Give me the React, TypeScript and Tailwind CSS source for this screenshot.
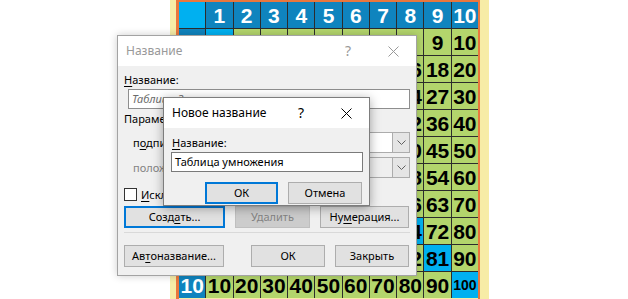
import React from 'react';

const HEADER = 'bg-[#0f84be] text-white';
const DIAG = 'bg-[#00b0f0] text-black';
const BODY = 'bg-[#b3d56c] text-black';

function Cell({ r, c }: { r: number; c: number }) {
  let cls = BODY;
  let value = '';
  if (r === 0 && c === 0) cls = DIAG;
  else if (r === 0 || c === 0) {
    cls = HEADER;
    value = String(r === 0 ? c : r);
  } else {
    cls = r === c ? DIAG : BODY;
    value = String(r * c);
  }
  const small = value.length > 2;
  return (
    <div
      className={`${cls} flex items-center justify-center font-bold leading-none ${
        small ? 'text-[14px]' : 'text-[21px]'
      }`}
    >
      {value}
    </div>
  );
}

function TimesTable() {
  const cells = [];
  for (let r = 0; r < 11; r++) {
    for (let c = 0; c < 11; c++) {
      cells.push(<Cell key={`${r}-${c}`} r={r} c={c} />);
    }
  }
  return (
    <div className="ml-[170px] w-[319px] h-[299px] bg-[#f7eca6] pl-[6px]">
      <div className="w-[304px] h-[299px] border-l-[3px] border-r-[2px] border-t-[2px] border-[#e9773d] overflow-hidden">
        <div className="grid grid-cols-11 auto-rows-[26px] gap-px bg-[#2c2c2c] w-[299px] font-['Liberation_Sans',Arial,sans-serif]">
          {cells}
        </div>
      </div>
    </div>
  );
}

function CloseIcon({ color }: { color: string }) {
  return (
    <svg width="11" height="11" viewBox="0 0 11 11">
      <path d="M0.5 0.5 L10.5 10.5 M10.5 0.5 L0.5 10.5" stroke={color} strokeWidth="1" fill="none" />
    </svg>
  );
}

function TitleBar({ title, active }: { title: string; active: boolean }) {
  const color = active ? '#000000' : '#999999';
  return (
    <div className="h-[30px] bg-white flex items-center text-[12px]">
      <div className={`flex-1 pl-[8px] ${active ? 'text-black' : 'text-[#999999]'}`}>{title}</div>
      <div className={`w-[46px] flex justify-center text-[14px] ${active ? 'text-black' : 'text-[#999999]'}`}>?</div>
      <div className="w-[45px] flex justify-center">
        <CloseIcon color={color} />
      </div>
    </div>
  );
}

function Button({
  children,
  width,
  focused,
  disabled,
}: {
  children: React.ReactNode;
  width: string;
  focused?: boolean;
  disabled?: boolean;
}) {
  return (
    <div
      className={`${width} h-[22px] flex items-center justify-center ${
        focused
          ? 'border-2 border-[#0078d7] bg-[#e1e1e1]'
          : disabled
          ? 'border border-[#bfbfbf] bg-[#cccccc] text-[#838383]'
          : 'border border-[#adadad] bg-[#e1e1e1]'
      }`}
    >
      {children}
    </div>
  );
}

function Select({ disabled }: { disabled?: boolean }) {
  return (
    <div
      className={`ml-auto w-[210px] h-[21px] flex border border-[#acacac] ${
        disabled ? 'bg-[#efefef]' : 'bg-white'
      }`}
    >
      <div className="flex-1" />
      <div className="w-[17px] bg-[#e5e5e5] border-l border-[#acacac] flex items-center justify-center">
        <svg width="9" height="5" viewBox="0 0 9 5">
          <path d="M0.5 0.5 L4.5 4.5 L8.5 0.5" stroke="#606060" strokeWidth="1" fill="none" />
        </svg>
      </div>
    </div>
  );
}

const U = ({ children }: { children: React.ReactNode }) => (
  <span className="underline underline-offset-2">{children}</span>
);

function CaptionDialog() {
  return (
    <div className="absolute left-[117px] top-[35px] w-[300px] h-[241px] border border-[#a3a3a3] bg-[#f0f0f0] shadow-[0_0_8px_rgba(0,0,0,0.2)]">
      <TitleBar title="Название" active={false} />
      <div className="px-[6px] pt-[6px] text-black">
        <div className="h-[16px] leading-[16px]">
          <U>Н</U>азвание:
        </div>
        <div className="mt-[1px] ml-[4px] w-[282px] h-[20px] border border-[#8e8e8e] bg-white flex items-center pl-[3px] italic text-[#6b6b6b]">
          Таблица 3
        </div>
        <div className="mt-[2px] h-[16px] leading-[16px]">Параметры</div>
        <div className="mt-[5px] flex items-center">
          <div className="pl-[9px]">
            п<U>о</U>дпись:
          </div>
          <Select />
        </div>
        <div className="mt-[4px] flex items-center">
          <div className="pl-[9px] text-[#838383]">положение:</div>
          <Select disabled />
        </div>
        <div className="mt-[10px] flex items-center h-[13px]">
          <div className="w-[13px] h-[13px] border border-[#333333] bg-white" />
          <div className="ml-[4px]">
            <U>И</U>сключить подпись из названия
          </div>
        </div>
        <div className="mt-[5px] flex gap-[10px]">
          <Button width="w-[101px]" focused>
            Созд<U>а</U>ть...
          </Button>
          <Button width="w-[75px]" disabled>
            Удалить
          </Button>
          <Button width="w-[89px]">
            Ну<U>м</U>ерация...
          </Button>
        </div>
        <div className="mt-[4px] h-px bg-[#d9d9d9]" />
        <div className="mt-[12px] flex">
          <Button width="w-[100px]">
            Ав<U>т</U>оназвание...
          </Button>
          <div className="ml-[27px]">
            <Button width="w-[74px]">ОК</Button>
          </div>
          <div className="ml-[10px]">
            <Button width="w-[74px]">Закрыть</Button>
          </div>
        </div>
      </div>
    </div>
  );
}

function NewLabelDialog() {
  return (
    <div className="absolute left-[163px] top-[97px] w-[207px] h-[109px] border border-[#7d7d7d] bg-[#f0f0f0] shadow-[0_2px_10px_rgba(0,0,0,0.35)]">
      <TitleBar title="Новое название" active />
      <div className="pl-[7px] pr-[7px] pt-[7px] text-black">
        <div className="pl-[1px] h-[16px] leading-[16px]">
          <U>Н</U>азвание:
        </div>
        <div className="mt-[1px] w-[192px] h-[20px] border border-[#7a7a7a] bg-white flex items-center pl-[3px]">
          Таблица умножения
        </div>
        <div className="mt-[10px] flex justify-end gap-[10px]">
          <Button width="w-[73px]" focused>
            ОК
          </Button>
          <Button width="w-[74px]">Отмена</Button>
        </div>
      </div>
    </div>
  );
}

export default function App() {
  return (
    <div className="relative w-[628px] h-[299px] bg-white overflow-hidden">
      <TimesTable />
      <div className="font-['Noto_Sans',Arial,sans-serif] text-[11px] leading-[16px]">
        <CaptionDialog />
        <NewLabelDialog />
      </div>
    </div>
  );
}
